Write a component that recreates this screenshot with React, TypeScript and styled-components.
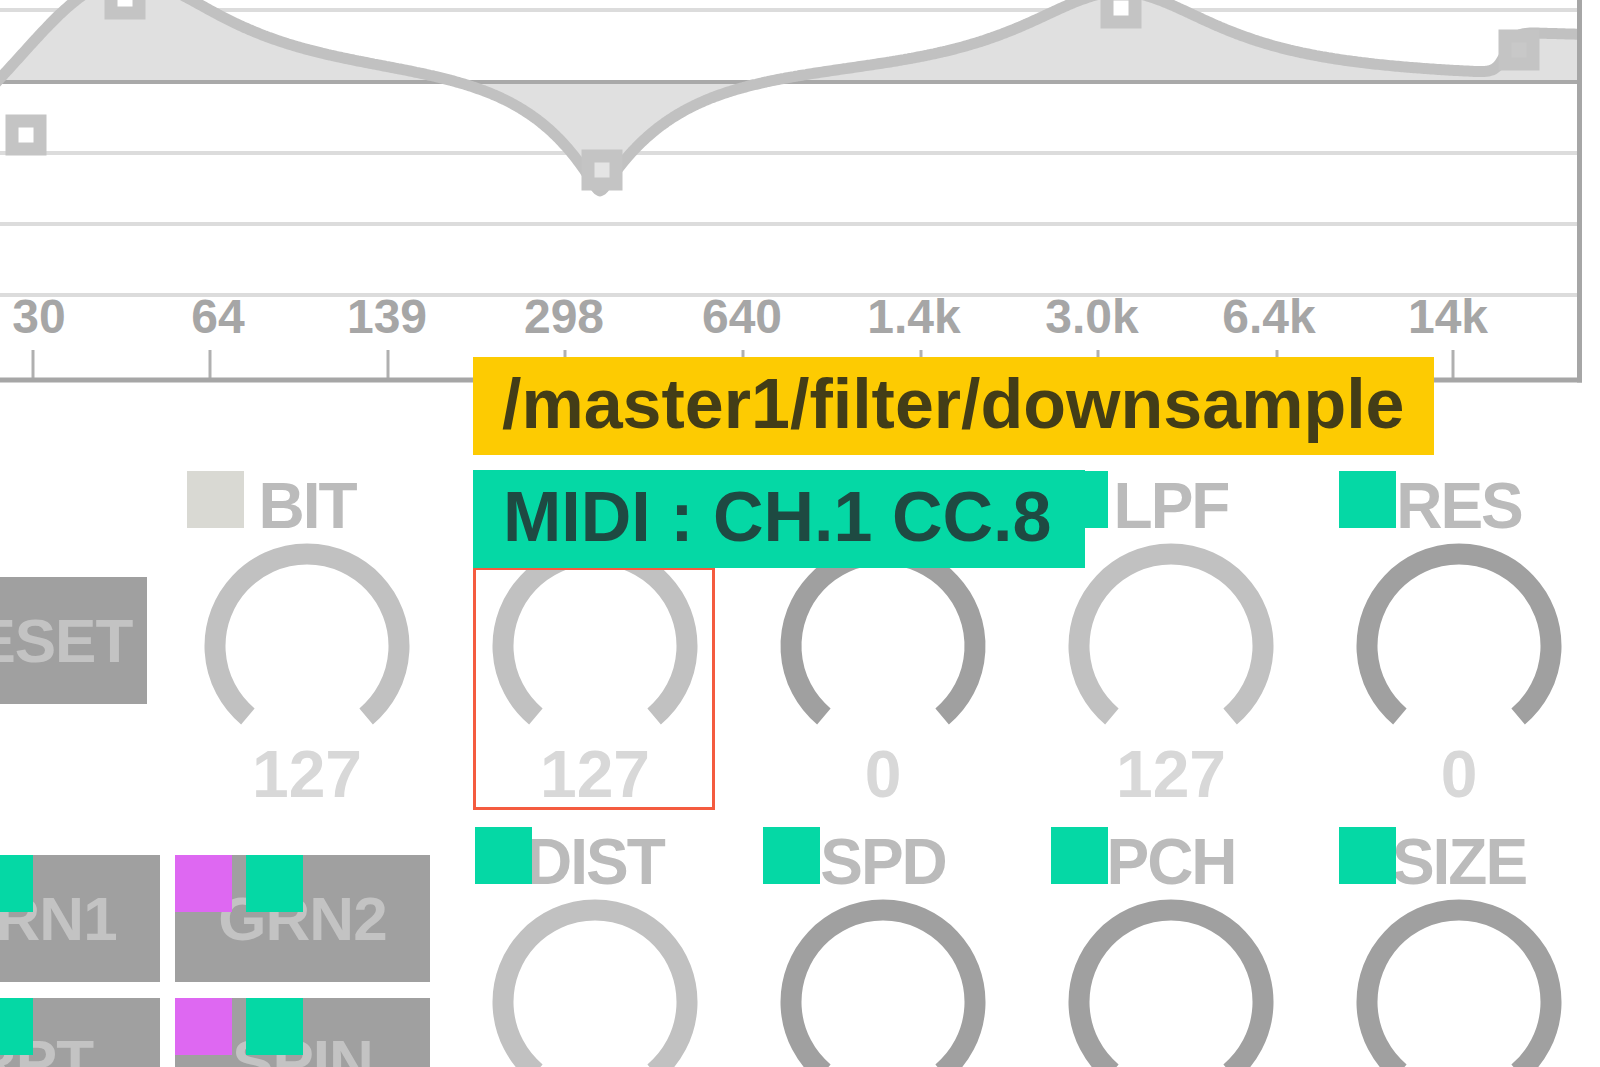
import React from 'react';
import styled, { createGlobalStyle } from 'styled-components';

const GlobalStyle = createGlobalStyle`
  html, body { margin: 0; padding: 0; background: #ffffff; overflow: hidden; }
  body { font-family: "Liberation Sans", Arial, sans-serif; }
  #root { width: 1600px; height: 1067px; }
`;

const Page = styled.div`
  position: relative;
  width: 1600px;
  height: 1067px;
  overflow: hidden;
  background: #ffffff;
`;

const GraphSvg = styled.svg`
  display: block;
`;

const Controls = styled.div`
  display: grid;
  grid-template-columns: 139px repeat(5, 240px);
  grid-auto-rows: auto;
  column-gap: 48px;
  row-gap: 20px;
  margin-top: 87px;
`;

const PadButton = styled.div<{ $shift?: number }>`
  position: relative;
  width: 255px;
  height: 127px;
  box-sizing: border-box;
  padding-left: ${(p) => (p.$shift || 0) * 2}px;
  background: #a0a0a0;
  color: #c3c3c3;
  font-family: "Liberation Sans", Arial, sans-serif;
  font-weight: 700;
  font-size: 62px;
  line-height: 1;
  letter-spacing: -1px;
  display: flex;
  align-items: center;
  justify-content: center;
  white-space: nowrap;
  overflow: hidden;
`;

const ResetButton = styled(PadButton)`
  grid-column: 1;
  margin-left: -108px;
  margin-top: 106px;
`;

const PadGrid = styled.div`
  grid-column: 1 / span 2;
  justify-self: end;
  margin-right: -3px;
  margin-top: 28px;
  width: 525px;
  display: grid;
  grid-template-columns: 255px 255px;
  grid-auto-rows: 127px;
  column-gap: 15px;
  row-gap: 16px;
`;

const Flag = styled.span<{ $color: string; $left: number }>`
  position: absolute;
  top: 0;
  left: ${(p) => p.$left}px;
  width: 57px;
  height: 57px;
  background: ${(p) => p.$color};
`;

const Cell = styled.div<{ $col: number }>`
  grid-column: ${(p) => p.$col};
  position: relative;
  width: 240px;
  display: flex;
  flex-direction: column;
  align-items: center;
`;

const LabelRow = styled.div`
  position: relative;
  width: 100%;
  height: 57px;
  display: flex;
  justify-content: center;
  align-items: flex-end;
`;

const LabelText = styled.span`
  font-family: "Liberation Sans", Arial, sans-serif;
  font-weight: 700;
  font-size: 64px;
  line-height: 64px;
  letter-spacing: -2px;
  margin-bottom: -10px;
  color: #bbbbbb;
  white-space: nowrap;
`;

const KnobSvg = styled.svg`
  display: block;
  margin-top: 13px;
  flex: none;
`;

const Value = styled.div`
  margin-top: 10px;
  font-family: "Liberation Sans", Arial, sans-serif;
  font-weight: 700;
  font-size: 66px;
  line-height: 66px;
  color: #d8d8d8;
`;

const Selection = styled.div`
  position: absolute;
  left: -2px;
  top: 96px;
  width: 242px;
  height: 243px;
  box-sizing: border-box;
  border: 3px solid #f45b3f;
  pointer-events: none;
`;

const Tip = styled.div<{ $bg: string; $fg: string; $left: number; $top: number; $width: number; $size: number; $pad: number }>`
  position: absolute;
  left: ${(p) => p.$left}px;
  top: ${(p) => p.$top}px;
  width: ${(p) => p.$width}px;
  height: 98px;
  box-sizing: border-box;
  padding-left: ${(p) => p.$pad}px;
  padding-bottom: 5px;
  background: ${(p) => p.$bg};
  color: ${(p) => p.$fg};
  font-family: "Liberation Sans", Arial, sans-serif;
  font-weight: 700;
  font-size: ${(p) => p.$size}px;
  line-height: 1;
  display: flex;
  align-items: center;
  white-space: nowrap;
  z-index: 5;
`;

/* EQ response: HPF + bell + notch + bell + high shelf, drawn as a chart */
function eqGain(x: number): number {
  const hpf = -14 * Math.log(1 + Math.exp((65 - x) / 20));
  const bell1 = 103 / (1 + Math.pow((x - 128) / 121, 2));
  const d = x - 600;
  const w = d < 0 ? 68 : 74;
  const notch = -120 * Math.exp(-(Math.sqrt(d * d + 9) - 3) / w);
  const bell2 = 88.8 / (1 + Math.pow((x - 1120) / 124, 2));
  const shelf = 41 / (1 + Math.exp(-(x - 1506) / 5));
  return hpf + bell1 + notch + bell2 + shelf;
}

function curvePath(): string {
  const parts: string[] = [];
  for (let x = -20; x <= 1600; x += 2) {
    const y = 82 - eqGain(x);
    parts.push(`${parts.length ? 'L' : 'M'}${x},${y.toFixed(1)}`);
  }
  return parts.join(' ');
}

const axis = [
  { t: '30', x: 39 }, { t: '64', x: 218 }, { t: '139', x: 387 },
  { t: '298', x: 564 }, { t: '640', x: 742 }, { t: '1.4k', x: 914 },
  { t: '3.0k', x: 1092 }, { t: '6.4k', x: 1269 }, { t: '14k', x: 1448 },
];
const ticks = [33, 210, 388, 565, 743, 921, 1098, 1277, 1453];
const nodes: { x: number; y: number; fill: string }[] = [
  { x: 125, y: -1, fill: '#ffffff' },
  { x: 26, y: 135, fill: '#ffffff' },
  { x: 602, y: 170, fill: '#e4e4e4' },
  { x: 1121, y: 8, fill: '#ffffff' },
  { x: 1519, y: 50, fill: '#c8c8c8' },
];

const EqGraph: React.FC = () => {
  const curve = curvePath();
  const fill = `${curve} L1600,82 L-20,82 Z`;
  return (
    <GraphSvg width={1600} height={384} viewBox="0 0 1600 384">
      <defs>
        <clipPath id="plot">
          <rect x={0} y={-100} width={1578} height={478} />
        </clipPath>
      </defs>
      <g clipPath="url(#plot)">
        {[10, 153, 224, 295].map((y) => (
          <line key={y} x1={0} x2={1578} y1={y} y2={y} stroke="#dcdcdc" strokeWidth={4} />
        ))}
        <path d={fill} fill="#e0e0e0" />
        <line x1={0} x2={1578} y1={82} y2={82} stroke="#a9a9a9" strokeWidth={4} />
        <path d={curve} fill="none" stroke="#c1c1c1" strokeWidth={11} strokeLinejoin="round" />
        {nodes.map((n, i) => (
          <rect key={i} x={n.x - 14} y={n.y - 14} width={28} height={28} fill={n.fill} stroke="#c4c4c4" strokeWidth={13} />
        ))}
      </g>
      {axis.map((a) => (
        <text
          key={a.t}
          x={a.x}
          y={333}
          textAnchor="middle"
          fontFamily='"Liberation Sans", Arial, sans-serif'
          fontWeight={700}
          fontSize={48}
          fill="#a6a6a6"
        >
          {a.t}
        </text>
      ))}
      {ticks.map((x) => (
        <line key={x} x1={x} x2={x} y1={350} y2={379} stroke="#b0b0b0" strokeWidth={3} />
      ))}
      <line x1={0} x2={1582} y1={380} y2={380} stroke="#a6a6a6" strokeWidth={5} />
      <line x1={1579.5} x2={1579.5} y1={0} y2={382.5} stroke="#a6a6a6" strokeWidth={5} />
    </GraphSvg>
  );
};

const LIGHT = '#c1c1c1';
const DARK = '#a0a0a0';
const GREEN = '#05d8a5';
const MAGENTA = '#de68f2';

const Knob: React.FC<{ color: string }> = ({ color }) => {
  const cx = 105;
  const cy = 105;
  const r = 92;
  const a = (140 * Math.PI) / 180;
  const sx = cx - r * Math.sin(a);
  const sy = cy - r * Math.cos(a);
  const ex = cx + r * Math.sin(a);
  return (
    <KnobSvg width={210} height={190} viewBox="0 0 210 190">
      <path
        d={`M${sx.toFixed(2)},${sy.toFixed(2)} A${r},${r} 0 1 1 ${ex.toFixed(2)},${sy.toFixed(2)}`}
        fill="none"
        stroke={color}
        strokeWidth={21}
      />
    </KnobSvg>
  );
};

type KnobDef = { id: string; label?: string; flag: string; color: string; value?: string; col: number; selected?: boolean };

const KnobCell: React.FC<{ k: KnobDef }> = ({ k }) => (
  <Cell $col={k.col}>
    <LabelRow>
      {k.label && <LabelText>{k.label}</LabelText>}
      <Flag $color={k.flag} $left={0} />
    </LabelRow>
    <Knob color={k.color} />
    {k.value !== undefined && <Value>{k.value}</Value>}
    {k.selected && <Selection />}
  </Cell>
);

const row1: KnobDef[] = [
  { id: 'bit', label: 'BIT', flag: '#d9d9d3', color: LIGHT, value: '127', col: 2 },
  { id: 'dwn', flag: GREEN, color: LIGHT, value: '127', col: 3, selected: true },
  { id: 'hpf', flag: GREEN, color: DARK, value: '0', col: 4 },
  { id: 'lpf', label: 'LPF', flag: GREEN, color: LIGHT, value: '127', col: 5 },
  { id: 'res', label: 'RES', flag: GREEN, color: DARK, value: '0', col: 6 },
];

const row2: KnobDef[] = [
  { id: 'dist', label: 'DIST', flag: GREEN, color: LIGHT, col: 3 },
  { id: 'spd', label: 'SPD', flag: GREEN, color: DARK, col: 4 },
  { id: 'pch', label: 'PCH', flag: GREEN, color: DARK, col: 5 },
  { id: 'size', label: 'SIZE', flag: GREEN, color: DARK, col: 6 },
];

const pads = ['GRN1', 'GRN2', 'RPT', 'SPIN'];

export default function App() {
  return (
    <Page>
      <GlobalStyle />
      <EqGraph />
      <Controls>
        <ResetButton $shift={12}>RESET</ResetButton>
        {row1.map((k) => (
          <KnobCell key={k.id} k={k} />
        ))}
        <PadGrid>
          {pads.map((p) => (
            <PadButton key={p}>
              {p}
              <Flag $color={MAGENTA} $left={0} />
              <Flag $color={GREEN} $left={71} />
            </PadButton>
          ))}
        </PadGrid>
        {row2.map((k) => (
          <KnobCell key={k.id} k={k} />
        ))}
      </Controls>
      <Tip $bg="#fdcb02" $fg="#433d17" $left={473} $top={357} $width={961} $size={70} $pad={29}>
        /master1/filter/downsample
      </Tip>
      <Tip $bg={GREEN} $fg="#1e4a42" $left={473} $top={470} $width={612} $size={70} $pad={30}>
        MIDI : CH.1 CC.8
      </Tip>
    </Page>
  );
}
